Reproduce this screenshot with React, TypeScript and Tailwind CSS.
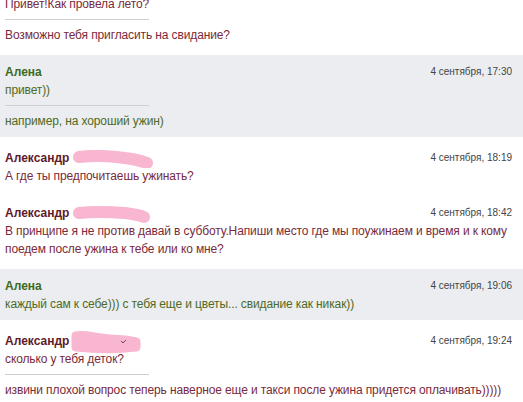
import React from "react"

type Msg = {
  who: "alex" | "alena"
  time?: string
  lines: string[]
  blob?: "a" | "b" | "c"
  noName?: boolean
}

const messages: Msg[] = [
  {
    who: "alex",
    noName: true,
    lines: ["Привет!Как провела лето?", "Возможно тебя пригласить на свидание?"],
  },
  {
    who: "alena",
    time: "4 сентября, 17:30",
    lines: ["привет))", "например, на хороший ужин)"],
  },
  {
    who: "alex",
    time: "4 сентября, 18:19",
    lines: ["А где ты предпочитаешь ужинать?"],
    blob: "a",
  },
  {
    who: "alex",
    time: "4 сентября, 18:42",
    lines: [
      "В принципе я не против давай в субботу.Напиши место где мы поужинаем и время и к кому поедем после ужина к тебе или ко мне?",
    ],
    blob: "b",
  },
  {
    who: "alena",
    time: "4 сентября, 19:06",
    lines: ["каждый сам к себе))) с тебя еще и цветы... свидание как никак))"],
  },
  {
    who: "alex",
    time: "4 сентября, 19:24",
    lines: [
      "сколько у тебя деток?",
      "извини плохой вопрос теперь наверное еще и такси после ужина придется оплачивать)))))",
    ],
    blob: "c",
  },
]

// розовые закраски фамилии
function Blob({ kind }: { kind: "a" | "b" | "c" }) {
  if (kind === "c") {
    return (
      <svg className="absolute left-[60px] top-[-4px]" width="80" height="28" viewBox="0 0 80 28">
        <path
          d="M11 8 C 20 6, 30 10, 45 11 C 58 12, 66 12, 71 14 L 71 19 C 55 21, 30 21, 11 19 Z"
          fill="#f8b6d0"
          stroke="#f8b6d0"
          strokeWidth="9"
          strokeLinejoin="round"
        />
        <path d="M56 13 l2 2 l3 -3" stroke="#6b4a55" strokeWidth="1" fill="none" />
      </svg>
    )
  }
  const d =
    kind === "a"
      ? "M12 7 C 30 5, 45 6, 58 8 C 68 9, 74 11, 80 13"
      : "M12 8 C 30 6, 45 7, 58 8 C 66 9, 72 10, 77 12"
  return (
    <svg className="absolute left-[62px] top-[1px]" width="92" height="18" viewBox="0 0 92 18">
      <path d={d} stroke="#f8b6d0" strokeWidth="12" strokeLinecap="round" fill="none" />
    </svg>
  )
}

export default function App() {
  return (
    <div className="w-[523px] h-[402px] overflow-hidden bg-white font-['Liberation_Sans',Arial,sans-serif] text-[12px] tracking-[-0.12px]">
      <div className="-mt-[5px] flex flex-col gap-[4px]">
        {messages.map((m, i) => {
          const green = m.who === "alena"
          return (
            <div
              key={i}
              className={`pl-[5px] pr-[6px] pb-[7px] ${m.noName ? "" : "pt-[8px]"} ${green ? "bg-[#ebedf0]" : "bg-white"}`}
            >
              {!m.noName && (
                <div className="relative flex items-center justify-between pr-[5px] leading-[18px]">
                  <span className={`font-bold tracking-normal ${green ? "text-[#3f6a1e]" : "text-[#5e1a28]"}`}>
                    {green ? "Алена" : "Александр"}
                  </span>
                  {m.blob && <Blob kind={m.blob} />}
                  <span className="text-[10px] tracking-normal text-[#444]">{m.time}</span>
                </div>
              )}
              {m.lines.map((t, j) => (
                <React.Fragment key={j}>
                  {j > 0 && <div className="my-[6px] h-px w-[144px] bg-[#cfcfcf]" />}
                  <div className={`leading-[18px] ${green ? "text-[#4f6a25]" : "text-[#7a2a3a]"}`}>{t}</div>
                </React.Fragment>
              ))}
            </div>
          )
        })}
      </div>
    </div>
  )
}
